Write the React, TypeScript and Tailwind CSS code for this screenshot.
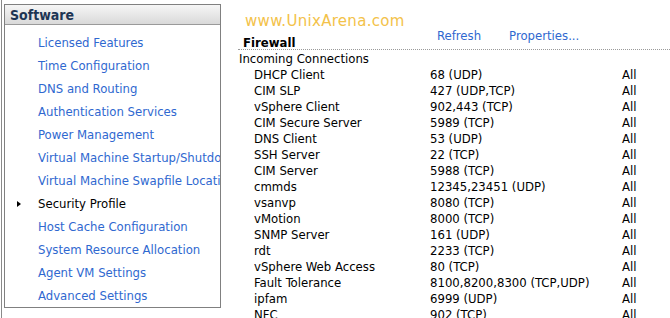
import React from 'react';

const menu = [
  'Licensed Features',
  'Time Configuration',
  'DNS and Routing',
  'Authentication Services',
  'Power Management',
  'Virtual Machine Startup/Shutdown',
  'Virtual Machine Swapfile Location',
  'Security Profile',
  'Host Cache Configuration',
  'System Resource Allocation',
  'Agent VM Settings',
  'Advanced Settings',
];

const rules: [string, string][] = [
  ['DHCP Client', '68 (UDP)'],
  ['CIM SLP', '427 (UDP,TCP)'],
  ['vSphere Client', '902,443 (TCP)'],
  ['CIM Secure Server', '5989 (TCP)'],
  ['DNS Client', '53 (UDP)'],
  ['SSH Server', '22 (TCP)'],
  ['CIM Server', '5988 (TCP)'],
  ['cmmds', '12345,23451 (UDP)'],
  ['vsanvp', '8080 (TCP)'],
  ['vMotion', '8000 (TCP)'],
  ['SNMP Server', '161 (UDP)'],
  ['rdt', '2233 (TCP)'],
  ['vSphere Web Access', '80 (TCP)'],
  ['Fault Tolerance', '8100,8200,8300 (TCP,UDP)'],
  ['ipfam', '6999 (UDP)'],
  ['NFC', '902 (TCP)'],
];

export default function App() {
  return (
    <div className="flex w-[670px] h-[318px] overflow-hidden bg-white text-[13px] text-black font-['DejaVu_Sans_Condensed','DejaVu_Sans',sans-serif] font-stretch-condensed">
      {/* left nav */}
      <div className="ml-px border-l border-[#8a8a8a] pl-[2px] pt-[4px] shrink-0">
        <div className="w-[217px] h-[304px] border border-[#808080] bg-white">
          <div className="h-[20px] border-b border-[#9a9a9a] bg-gradient-to-b from-[#f6f6f6] to-[#d9d9d9] pl-[5px] leading-[20px] text-[14px] font-bold text-[#1d3554]">
            Software
          </div>
          <div className="pt-[6px]">
            {menu.map((m) => {
              const active = m === 'Security Profile';
              return (
                <div key={m} className="relative h-[23px] leading-[23px] pl-[33px] whitespace-nowrap overflow-hidden">
                  {active && (
                    <span className="absolute left-[12px] top-[9px] w-0 h-0 border-y-[3px] border-y-transparent border-l-[4px] border-l-black" />
                  )}
                  <span className={active ? 'text-black' : 'text-[#2f68d0]'}>{m}</span>
                </div>
              );
            })}
          </div>
        </div>
      </div>

      {/* right panel */}
      <div className="flex-1 pl-[17px]">
        <div className="relative h-[51px]">
          <div className="absolute left-[7px] top-[10px] text-[15px] tracking-[0.3px] text-[#f3c24a] font-['DejaVu_Sans',sans-serif] font-stretch-normal">
            www.UnixArena.com
          </div>
          <div className="flex items-start pt-[26px]">
            <span className="ml-[5px] mt-[7px] font-bold w-[194px]">Firewall</span>
            <span className="text-[#2f68d0]">Refresh</span>
            <span className="ml-[28px] text-[#2f68d0]">Properties...</span>
          </div>
          <div className="absolute left-0 right-0 bottom-[1px] border-b border-dotted border-[#9a9a9a]" />
        </div>
        <div className="h-[16px] leading-[15px] pl-px">Incoming Connections</div>
        {rules.map(([n, p]) => (
          <div key={n} className="flex h-[16px] leading-[15px] whitespace-nowrap">
            <span className="w-[192px] pl-[16px]">{n}</span>
            <span className="w-[192px]">{p}</span>
            <span>All</span>
          </div>
        ))}
      </div>
    </div>
  );
}
